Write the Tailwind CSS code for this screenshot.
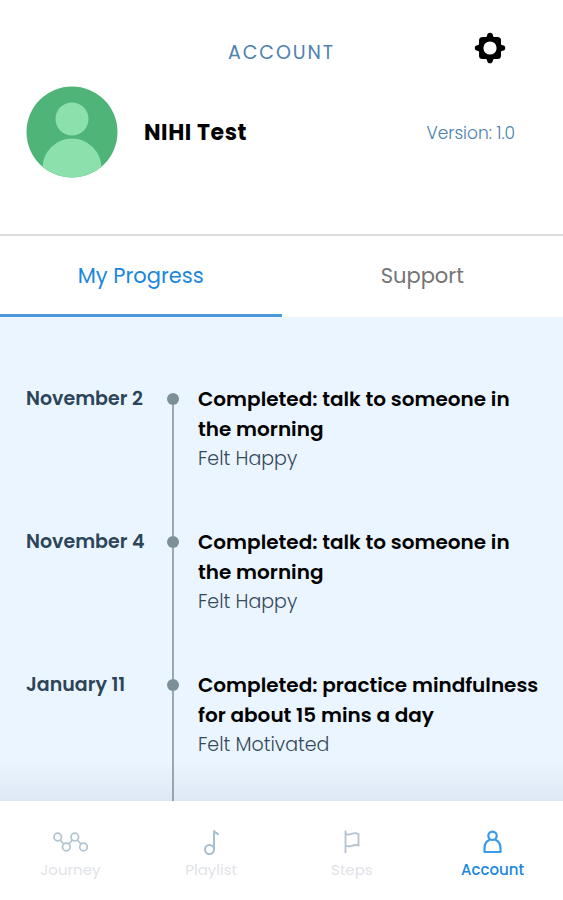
<!DOCTYPE html>
<html lang="en">
<head>
  <meta charset="UTF-8">
  <meta name="viewport" content="width=device-width, initial-scale=1.0">
  <title>Account</title>
  <script src="https://cdn.jsdelivr.net/npm/@tailwindcss/browser@4"></script>
</head>
<body class="h-screen flex flex-col bg-white font-[Poppins,Inter,sans-serif]">
  <header class="shrink-0 h-[236px] border-b-2 border-[#dcdcdc] pt-8">
    <div class="grid grid-cols-[1fr_auto_1fr] items-center h-10">
      <h1 class="col-start-2 pt-0.5 text-[19px] tracking-widest text-[#4f83b0]">ACCOUNT</h1>
      <button type="button" aria-label="Settings" class="justify-self-end mr-[57px] -mt-2">
        <svg class="w-8 h-8" viewBox="0 0 32 32">
          <rect x="5" y="5" width="22" height="22" rx="3.500"/>
          <rect x="5.500" y="5.500" width="21" height="21" rx="3" transform="rotate(45 16 16)"/>
          <circle cx="16" cy="3.600" r="2.800"/>
          <circle cx="16" cy="28.400" r="2.800"/>
          <circle cx="3.600" cy="16" r="2.800"/>
          <circle cx="28.400" cy="16" r="2.800"/>
          <circle cx="16" cy="16" r="6.600" fill="white"/>
        </svg>
      </button>
    </div>
    <div class="flex items-center pl-[26px] pr-12 mt-3.5">
      <svg class="w-[92px] h-[92px]" viewBox="0 0 92 92" role="img" aria-label="Profile picture">
        <clipPath id="avatar"><circle cx="46" cy="46" r="45.500"/></clipPath>
        <g clip-path="url(#avatar)">
          <rect width="92" height="92" fill="#4fb477"/>
          <circle cx="46" cy="33" r="16.500" fill="#8ce0ac"/>
          <circle cx="46" cy="82" r="29.500" fill="#8ce0ac"/>
        </g>
      </svg>
      <h2 class="ml-[26px] text-[22px] font-bold tracking-wide text-black">NIHI Test</h2>
      <p class="ml-auto mt-1 text-[17px] font-light text-[#4a80b0]">Version: 1.0</p>
    </div>
  </header>

  <div role="tablist" class="shrink-0 grid grid-cols-2 h-[81px] text-[21px]">
    <button type="button" role="tab" aria-selected="true" class="border-b-3 border-[#4a98dc] pt-0.5 text-[#1a86dc]">My Progress</button>
    <button type="button" role="tab" aria-selected="false" class="border-b-3 border-transparent pt-0.5 text-[#747474]">Support</button>
  </div>

  <main class="relative flex-1 min-h-0 overflow-hidden flex flex-col bg-[#ebf5ff] pt-[67px] pl-[26px] pr-5">
    <ol class="flex-1 flex flex-col">
      <li class="grid grid-cols-[134px_26px_1fr]">
        <h3 class="text-[19px] leading-[30px] font-semibold text-[#2c4558]">November 2</h3>
        <div class="flex flex-col items-center pt-[9px]">
          <span class="w-3 h-3 shrink-0 rounded-full bg-[#7e9097]"></span>
          <span class="w-0.5 flex-1 -mb-[9px] bg-[#9ba8af]"></span>
        </div>
        <div class="pl-3 pb-[53px]">
          <p class="text-[20px] leading-[30px] font-semibold text-black">Completed: talk to someone in<br>the morning</p>
          <p class="text-[19px] leading-[30px] font-light text-[#34495a]">Felt Happy</p>
        </div>
      </li>
      <li class="grid grid-cols-[134px_26px_1fr]">
        <h3 class="text-[19px] leading-[30px] font-semibold text-[#2c4558]">November 4</h3>
        <div class="flex flex-col items-center pt-[9px]">
          <span class="w-3 h-3 shrink-0 rounded-full bg-[#7e9097]"></span>
          <span class="w-0.5 flex-1 -mb-[9px] bg-[#9ba8af]"></span>
        </div>
        <div class="pl-3 pb-[53px]">
          <p class="text-[20px] leading-[30px] font-semibold text-black">Completed: talk to someone in<br>the morning</p>
          <p class="text-[19px] leading-[30px] font-light text-[#34495a]">Felt Happy</p>
        </div>
      </li>
      <li class="flex-1 grid grid-cols-[134px_26px_1fr]">
        <h3 class="text-[19px] leading-[30px] font-semibold text-[#2c4558]">January 11</h3>
        <div class="flex flex-col items-center pt-[9px]">
          <span class="w-3 h-3 shrink-0 rounded-full bg-[#7e9097]"></span>
          <span class="w-0.5 flex-1 bg-[#9ba8af]"></span>
        </div>
        <div class="pl-3">
          <p class="text-[20px] leading-[30px] font-semibold text-black">Completed: practice mindfulness<br>for about 15 mins a day</p>
          <p class="text-[19px] leading-[30px] font-light text-[#34495a]">Felt Motivated</p>
        </div>
      </li>
    </ol>
    <div class="absolute inset-x-0 bottom-0 h-10 bg-linear-to-b from-transparent to-[#8080a0]/12 pointer-events-none"></div>
  </main>

  <nav class="shrink-0 h-[99px] grid grid-cols-4 pt-7 text-[15px] leading-5 text-[#dfe3e9]">
    <a href="#journey" class="flex flex-col items-center gap-1">
      <svg class="w-9 h-[27px]" viewBox="0 0 36 27" fill="none" stroke="#b0c5d1" stroke-width="1.700">
        <circle cx="5.700" cy="8" r="3.800"/>
        <circle cx="14.300" cy="18" r="3.800"/>
        <circle cx="22.800" cy="8" r="3.800"/>
        <circle cx="31.500" cy="18" r="3.800"/>
        <path d="M8.200 11l3.500 4M16.800 15l3.500-4M25.300 11l3.700 4"/>
      </svg>
      Journey
    </a>
    <a href="#playlist" class="flex flex-col items-center gap-1">
      <svg class="w-[27px] h-[27px]" viewBox="0 0 27 27" fill="none" stroke="#a9bfcd" stroke-width="2">
        <circle cx="11.500" cy="20.500" r="4.500"/>
        <path d="M16 20.500V1.500c.5 3 3 1.500 4.300 4.500"/>
      </svg>
      Playlist
    </a>
    <a href="#steps" class="flex flex-col items-center gap-1">
      <svg class="w-[27px] h-[27px]" viewBox="0 0 27 27" fill="none" stroke="#b4c2d2" stroke-width="1.800">
        <path d="M7.500 1.500V24M7.500 4c1 1.500 3.500 2 6 .8 2-.8 5-.8 7 .2V16.500c-2-.8-4.500-.5-6.500.3-2.500.8-5 .5-6.500-.3"/>
      </svg>
      Steps
    </a>
    <a href="#account" aria-current="page" class="flex flex-col items-center gap-1 font-medium text-[#1a86e0]">
      <svg class="w-[27px] h-[27px]" viewBox="0 0 27 27" fill="none" stroke="#3a9aea" stroke-width="2.200" stroke-linejoin="round">
        <circle cx="13.500" cy="6.800" r="4.200"/>
        <path d="M10.700 10.800C7 12.300 5.500 15.500 5.500 19v4h16v-4c0-3.500-1.500-6.700-5.200-8.200"/>
      </svg>
      Account
    </a>
  </nav>
</body>
</html>
